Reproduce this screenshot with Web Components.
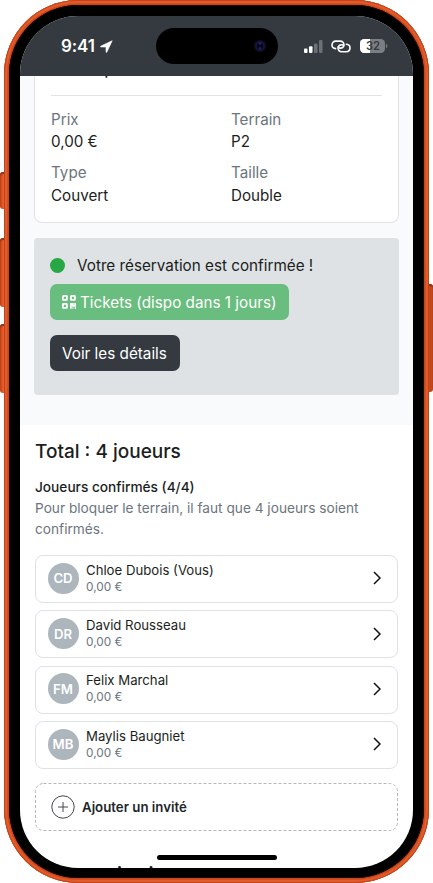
<!DOCTYPE html>
<html lang="fr"><head><meta charset="utf-8"><title>Réservation</title>
<style>
body{margin:0;background:#fff;font-family:Inter,"Liberation Sans",sans-serif;color:#1b1e21;overflow:hidden}
</style></head><body>
<phone-frame>
  <status-bar slot="status"></status-bar>
  <booking-top>
    <booking-card>
      <info-cell label="Prix">0,00 €</info-cell><info-cell label="Terrain">P2</info-cell>
      <info-cell label="Type">Couvert</info-cell><info-cell label="Taille">Double</info-cell>
    </booking-card>
    <confirm-panel>Votre réservation est confirmée !</confirm-panel>
  </booking-top>
  <player-section>
    <player-row initials="CD" price="0,00 €">Chloe Dubois (Vous)</player-row>
    <player-row initials="DR" price="0,00 €">David Rousseau</player-row>
    <player-row initials="FM" price="0,00 €">Felix Marchal</player-row>
    <player-row initials="MB" price="0,00 €">Maylis Baugniet</player-row>
    <add-guest>Ajouter un invité</add-guest>
  </player-section>
</phone-frame>
<script>
function define(name, render){
  customElements.define(name, class extends HTMLElement{
    constructor(){ super(); this.attachShadow({mode:'open'}); }
    connectedCallback(){
      const t=document.createElement('template');
      t.innerHTML='<style>*{box-sizing:border-box}:host{display:block;box-sizing:border-box}</style>'+render(this);
      this.shadowRoot.replaceChildren(t.content.cloneNode(true));
    }
  });
}
define('phone-frame',()=>`<style>
:host{position:relative;width:433px;height:883px;overflow:hidden}
.key{position:absolute;background:linear-gradient(90deg,#b9431a,#ea5b2a 35%,#e55727);border-radius:3px;width:9px;box-shadow:inset 0 2px 1px #8c3519}
.body{position:absolute;left:4px;top:0;width:425px;height:883px;border-radius:74px;padding:5px;background:#c84718;box-shadow:inset 0 0 0 1px #bd461d,inset 0 0 0 3px #e55a2b,inset 0 0 0 4px #d14e20}
.bezel{height:100%;border-radius:69px;background:#000;padding:11px;box-shadow:inset 0 0 0 1px #1d0b04}
.screen{height:852px;width:393px;border-radius:58px;overflow:hidden;background:#fff;display:flex;flex-direction:column}
.content{flex:1;overflow:hidden}
.home{position:absolute;left:157px;top:855px;width:120px;height:5px;border-radius:3px;background:#000}
</style>
<div class="key" style="left:0;top:172px;height:37px"></div>
<div class="key" style="left:0;top:238px;height:69px"></div>
<div class="key" style="left:0;top:324px;height:69px"></div>
<div class="key" style="left:424px;top:284px;height:108px;background:#c2481d"></div>
<div class="body"><div class="bezel"><div class="screen"><slot name="status"></slot><div class="content"><slot></slot></div></div></div></div>
<div class="home"></div>`);
define('status-bar',()=>`<style>
:host{display:flex;height:60px;flex:none;background:#343a40;color:#fff;padding:12px 0 0 41px;align-items:flex-start}
.time{display:flex;align-items:center;gap:5px;height:36px;width:94.5px;flex:none;font-size:17px;font-weight:600;letter-spacing:-.1px}
.island{width:122px;flex:none;height:36px;border-radius:18px;background:#000;display:flex;align-items:center;justify-content:flex-end;padding-right:11px}
.icons{height:36px;flex:none;display:flex;align-items:center;margin-left:26px}
</style>
<div class="time"><span>9:41</span><svg width="13" height="13" viewBox="0 0 13 13"><path d="M12.2.7 6.9 12.1c-.3.6-.9.5-.9-.2V7H1.1C.4 7 .3 6.4.9 6.1Z" fill="#fff" stroke="#fff" stroke-width=".6" stroke-linejoin="round"/></svg></div>
<div class="island"><svg width="14" height="14" viewBox="0 0 14 14"><circle cx="7" cy="7" r="6.2" fill="#0c0b20"/><circle cx="7" cy="7" r="4" fill="#07071b" stroke="#191741" stroke-width="1.5"/><circle cx="7" cy="4.5" r="1.2" fill="#25275b"/><circle cx="7" cy="9.3" r="1.2" fill="#202253"/></svg></div>
<div class="icons">
<svg width="19" height="13" viewBox="0 0 19 13"><g fill="#fff"><rect x="0" y="8.5" width="3.5" height="4.5" rx="1"/><rect x="5" y="6.3" width="3.5" height="6.7" rx="1"/><g opacity=".28"><rect x="10" y="3.5" width="3.5" height="9.5" rx="1"/><rect x="15" y="0" width="3.5" height="13" rx="1"/></g></g></svg>
<svg style="margin-left:8px" width="20" height="13" viewBox="0 0 20 13" fill="none" stroke="#fff" stroke-width="1.6" stroke-linecap="round"><path d="M4.6 8.6C2.3 8.4 1 6.800 1 5c0-2.200 1.500-3.900 3.700-3.900h4.500c2.400 0 3.900 1.700 3.700 3.700-.2 2-1.700 3.300-3.500 3.300-1 0-1.700-.3-2.200-.9"/><path d="M15.400 4.300c2.300.2 3.600 1.700 3.600 3.500 0 2.200-1.500 3.900-3.700 3.900h-4.500C8.400 11.700 6.900 10 7.100 8c.2-2 1.700-3.300 3.500-3.300 1 0 1.700.3 2.200.9"/></svg>
<svg style="margin-left:9px" width="28" height="14" viewBox="0 0 28 14"><defs><clipPath id="c"><rect width="25" height="14" rx="4.200"/></clipPath></defs><g clip-path="url(#c)"><rect width="25" height="14" fill="#7b7f83"/><rect width="10" height="14" fill="#fff"/></g><path d="M26 4.700c1.800.8 1.800 3.800 0 4.600Z" fill="#7b7f83"/><text x="13" y="11" text-anchor="middle" font-size="11.200" font-weight="600" fill="#343a40">32</text></svg>
</div>`);
define('booking-top',()=>`<style>:host{height:349px;background:#f8fafc;padding:0 14px}</style><slot></slot>`);
define('booking-card',()=>`<style>
:host{height:147px;background:#fff;border:1px solid #e0e2e4;border-top:0;border-radius:0 0 8px 8px;padding:0 16px}
.top{height:20px;border-bottom:1px solid #e0e2e4;overflow:hidden;display:flex;align-items:flex-start}
.top span{font-size:19px;line-height:20px;margin-top:-18px;padding-left:53px}
.grid{display:grid;grid-template-columns:180px 1fr;padding-top:12.5px;row-gap:8px}
</style><div class="top"><span>p</span></div><div class="grid"><slot></slot></div></div>`);
define('info-cell',e=>`<style>:host{font-size:15.2px;line-height:22.75px}.l{color:#6c757d}</style><div class="l">${e.getAttribute('label')}</div><slot></slot>`);
define('confirm-panel',()=>`<style>
:host{margin-top:15px;height:157px;background:#dee2e5;border-radius:4px;padding:17px 16px 0;font-size:15.25px}
.line{display:flex;align-items:center;gap:12px;height:20px}
.dot{width:15px;height:15px;border-radius:50%;background:#28a745}
button{font:inherit;color:#fff;border:0;border-radius:7px;height:36px;padding:0 12px;display:flex;align-items:center;gap:4px;background:#343a40;width:130px}
.g{background:#69bd7e;margin:9px 0 15px;width:239px;white-space:nowrap}
</style><div class="line"><span class="dot"></span><span><slot></slot></span></div>
<button class="g"><svg width="14" height="14" viewBox="0 0 14 14" fill="none" stroke="#fff" stroke-width="1.800"><rect x=".9" y=".9" width="4" height="4" rx=".5"/><rect x="8.900" y=".9" width="4" height="4" rx=".5"/><rect x=".9" y="8.900" width="4" height="4" rx=".5"/><path d="M8.900 13.800V8.900h2v2h2.200V8M10.500 13.200h.9M12.700 13.200H14"/></svg><span>Tickets (dispo dans 1 jours)</span></button>
<button>Voir les détails</button>`);
define('player-section',()=>`<style>
:host{padding:15px 15px 0}
h2{font-size:19px;font-weight:500;line-height:24px;margin:0}
h3{font-size:13.68px;font-weight:500;line-height:20px;margin:13px 0 0}
p{font-size:13.68px;line-height:21px;color:#6c757d;margin:1px 0 15px}
.list{display:flex;flex-direction:column;gap:7.3px}
.next{display:flex;gap:26.5px;font-size:19px;font-weight:600;line-height:24px;margin-top:32px;padding-left:82px}
</style><h2>Total : 4 joueurs</h2><h3>Joueurs confirmés (4/4)</h3><p>Pour bloquer le terrain, il faut que 4 joueurs soient confirmés.</p><div class="list"><slot></slot></div><div class="next"><span>i</span><span>i</span></div>`);
define('player-row',e=>`<style>
:host{display:flex;align-items:center;height:48px;border:1px solid #dee2e6;border-radius:8px;padding:0 16px 1.500px 11.500px}
.a{width:31px;height:31px;border-radius:50%;background:#adb5bd;color:#fff;font-size:13.200px;font-weight:600;display:flex;align-items:center;justify-content:center;margin-right:7.500px}
.t{flex:1;font-size:13.200px;line-height:17px}.p{font-size:11.800px;line-height:16px;color:#6c757d}
</style><div class="a">${e.getAttribute('initials')}</div><div class="t"><slot></slot><div class="p">${e.getAttribute('price')}</div></div>
<svg width="8" height="14" viewBox="0 0 8 14"><path d="M1 1l6 6-6 6" fill="none" stroke="#111" stroke-width="1.500"/></svg>`);
define('add-guest',()=>`<style>
:host{display:flex;align-items:center;gap:7px;height:48px;margin-top:7px;padding-left:16px;position:relative;font-size:13.250px;font-weight:600;color:#212529}
.o{position:absolute;inset:0;width:100%;height:100%}
</style><svg class="o" viewBox="0 0 363 48"><rect x=".5" y=".5" width="362" height="47" rx="8" fill="none" stroke="#b3b8bc" stroke-dasharray="3 2"/></svg>
<svg width="24" height="24" viewBox="0 0 24 24" fill="none" stroke="#43474b"><circle cx="12" cy="12" r="11.200"/><path d="M12 7v10M7 12h10"/></svg><span><slot></slot></span>`);
</script></body></html>
